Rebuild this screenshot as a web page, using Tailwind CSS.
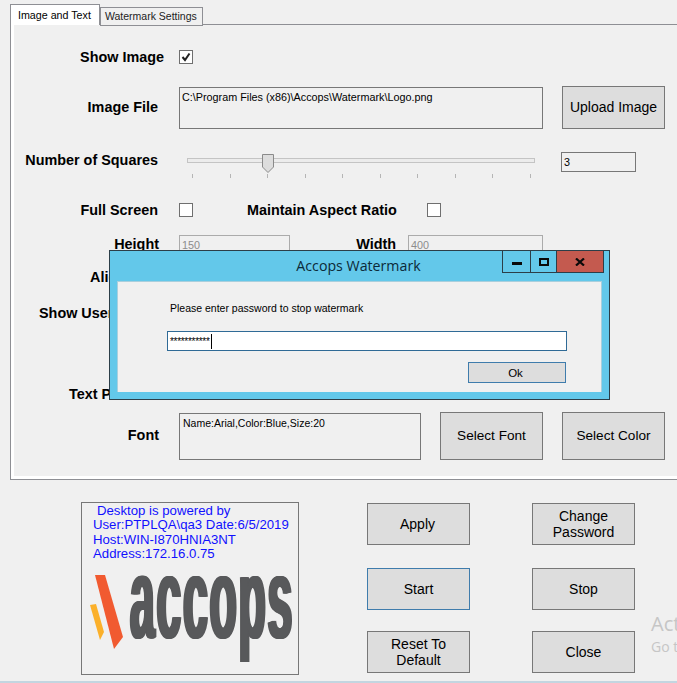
<!DOCTYPE html>
<html lang="en">

<head>
    <meta charset="UTF-8" />
    <meta name="viewport" content="width=device-width, initial-scale=1.0" />
    <title>Accops Watermark</title>
    <script src="https://cdn.jsdelivr.net/npm/@tailwindcss/browser@4"></script>
</head>

<body class="bg-[#f0f0f0]">
    <div class="relative w-[677px] h-[683px] overflow-hidden flex flex-col bg-[#f0f0f0] text-black font-['Liberation_Sans',sans-serif]">

        <!-- Tabs -->
        <div class="relative z-10 flex items-end h-[25px] ml-[10px] shrink-0 whitespace-nowrap">
            <div class="w-[90px] h-[21px] bg-white border border-b-0 border-[#8e8f94] pl-[7px] pt-[2px] text-[10.7px]">Image and Text</div>
            <div class="w-[103px] h-[19px] -mb-[1px] bg-[#f0f0f0] border border-[#8e8f94] pl-[4px] pt-[1px] text-[10.5px] text-[#222]">Watermark Settings</div>
        </div>

        <!-- Tab panel -->
        <div class="-mt-[1px] ml-[10px] w-[700px] h-[456px] shrink-0 border border-[#8e8f94]">
            <div class="h-full pt-[22px] border-l-[3px] border-b-[3px] border-white text-[14.4px] font-bold">

                <div class="flex items-center h-[20px]">
                    <div class="w-[165px] pr-[15px] pt-[2px] text-right">Show Image</div>
                    <div class="w-[14px] h-[14px] border border-[#6f6f6f] bg-white flex items-center justify-center">
                        <svg width="10" height="10" viewBox="0 0 10 10"><path d="M1.5 5 L4 8 L8.5 1.5" fill="none" stroke="#222" stroke-width="2" /></svg>
                    </div>
                </div>

                <div class="flex items-center h-[43px] mt-[19px]">
                    <div class="w-[165px] pr-[21px] text-right">Image File</div>
                    <div class="w-[364px] h-[42px] border border-[#777] pl-[2px] text-[10.8px] font-normal leading-[18px]">C:\Program Files (x86)\Accops\Watermark\Logo.png</div>
                    <div class="ml-[19px] w-[103px] h-[43px] border border-[#777] bg-[#dddddd] flex items-center justify-center font-normal text-[14px]">Upload Image</div>
                </div>

                <div class="flex h-[24px] mt-[19px]">
                    <div class="w-[165px] pr-[21px] text-right leading-[24px] whitespace-nowrap">Number of Squares</div>
                    <div class="relative ml-[8px] w-[348px] h-[30px]">
                        <div class="absolute left-0 right-0 top-[10px] h-[5px] bg-[#ececec] border border-[#c4c4c4]"></div>
                        <svg class="absolute left-[75px] top-[6px]" width="12" height="19" viewBox="0 0 12 19"><path d="M0.5 0.5 H11.5 V13 L6 18.5 L0.5 13 Z" fill="#dddddd" stroke="#8a8a8a" /></svg>
                        <div class="absolute left-[5px] w-[339px] top-[26px] h-[4px] flex justify-between">
                            <i class="w-px h-full bg-[#b5b5b5]"></i><i class="w-px h-full bg-[#b5b5b5]"></i><i class="w-px h-full bg-[#b5b5b5]"></i><i class="w-px h-full bg-[#b5b5b5]"></i><i class="w-px h-full bg-[#b5b5b5]"></i><i class="w-px h-full bg-[#b5b5b5]"></i><i class="w-px h-full bg-[#b5b5b5]"></i><i class="w-px h-full bg-[#b5b5b5]"></i><i class="w-px h-full bg-[#b5b5b5]"></i><i class="w-px h-full bg-[#b5b5b5]"></i>
                        </div>
                    </div>
                    <div class="ml-[26px] mt-[4px] w-[75px] h-[20px] border border-[#777] pl-[2px] text-[10.8px] font-normal leading-[18px]">3</div>
                </div>

                <div class="flex items-center h-[20px] mt-[28px]">
                    <div class="w-[165px] pr-[21px] pt-[2px] text-right">Full Screen</div>
                    <div class="w-[14px] h-[14px] border border-[#6f6f6f] bg-white"></div>
                    <div class="ml-[54px] w-[180px] pt-[2px] whitespace-nowrap">Maintain Aspect Ratio</div>
                    <div class="w-[14px] h-[14px] border border-[#6f6f6f] bg-white"></div>
                </div>

                <div class="flex items-start h-[20px] mt-[15px]">
                    <div class="w-[165px] pr-[20px] text-right leading-[18px]">Height</div>
                    <div class="w-[111px] h-[20px] border border-[#ababab] pl-[2px] text-[10.8px] font-normal text-[#8c8c8c] leading-[18px]">150</div>
                    <div class="w-[106px] text-right leading-[18px]">Width</div>
                    <div class="ml-[12px] w-[135px] h-[20px] border border-[#ababab] pl-[2px] text-[10.8px] font-normal text-[#8c8c8c] leading-[18px]">400</div>
                </div>

                <div class="flex items-center h-[20px] mt-[12px]">
                    <div class="pl-[76px] pt-[2px] whitespace-nowrap">Alignment</div>
                </div>

                <div class="flex items-center h-[20px] mt-[16px]">
                    <div class="pl-[25px] pt-[2px] whitespace-nowrap">Show User Details</div>
                </div>

                <div class="flex items-center h-[20px] mt-[61px]">
                    <div class="w-[165px] pl-[55px] pt-[2px] whitespace-nowrap">Text Position</div>
                    <div class="ml-[23px] text-[10.8px] font-normal">Top</div>
                </div>

                <div class="flex h-[49px] mt-[8px]">
                    <div class="w-[165px] pr-[20px] text-right leading-[46px]">Font</div>
                    <div class="mt-[1px] w-[242px] h-[47px] border border-[#777] pl-[3px] text-[10.5px] font-normal leading-[18px]">Name:Arial,Color:Blue,Size:20</div>
                    <div class="ml-[19px] w-[103px] h-[48px] border border-[#777] bg-[#dddddd] flex items-center justify-center font-normal text-[13.6px]">Select Font</div>
                    <div class="ml-[19px] w-[103px] h-[48px] border border-[#777] bg-[#dddddd] flex items-center justify-center font-normal text-[13.6px]">Select Color</div>
                </div>
            </div>
        </div>

        <!-- Bottom area -->
        <div class="flex flex-1 text-[14px]">
            <div class="relative ml-[81px] mt-[22px] w-[218px] h-[173px] border border-[#777] text-[13.2px] leading-[14.4px] text-[#1010ff] overflow-hidden">
                <div class="pt-[1px] whitespace-nowrap pl-[15px]">Desktop is powered by</div>
                <div class="pl-[11px] whitespace-nowrap">User:PTPLQA\qa3 Date:6/5/2019</div>
                <div class="pl-[11px] whitespace-nowrap">Host:WIN-I870HNIA3NT</div>
                <div class="pl-[11px] whitespace-nowrap">Address:172.16.0.75</div>
                <svg class="absolute left-0 top-0" width="216" height="171" viewBox="0 0 216 171">
                    <polygon points="13,72 23,72 41,134 32,146" fill="#f15a30" />
                    <polygon points="8,102 14,101 22,129 18,137" fill="#fbb02a" />
                </svg>
                <span class="absolute left-[48px] top-[60px] origin-top-left scale-x-[0.385] text-[115px] leading-[70px] tracking-[5px] font-bold text-[#58595b] [text-shadow:2px_0_0_#58595b,4px_0_0_#58595b,-2px_0_0_#58595b,-4px_0_0_#58595b]">accops</span>
            </div>

            <div class="ml-[68px] mt-[23px]">
                <div class="flex gap-[62px] mb-[23px]">
                    <div class="w-[103px] h-[42px] border border-[#777] bg-[#dddddd] flex items-center justify-center pr-[2px]">Apply</div>
                    <div class="w-[103px] h-[42px] border border-[#777] bg-[#dddddd] flex items-center justify-center text-center leading-[16px]">Change<br />Password</div>
                </div>
                <div class="flex gap-[62px] mb-[21px]">
                    <div class="w-[103px] h-[42px] border border-[#3f7cac] bg-[#dddddd] flex items-center justify-center">Start</div>
                    <div class="w-[103px] h-[42px] border border-[#777] bg-[#dddddd] flex items-center justify-center">Stop</div>
                </div>
                <div class="flex gap-[62px]">
                    <div class="w-[103px] h-[42px] border border-[#777] bg-[#dddddd] flex items-center justify-center text-center leading-[16px]">Reset To<br />Default</div>
                    <div class="w-[103px] h-[42px] border border-[#777] bg-[#dddddd] flex items-center justify-center">Close</div>
                </div>
            </div>
        </div>
        <div class="h-[2px] shrink-0 bg-[#c3d5e0]"></div>

        <!-- Windows activation watermark -->
        <div class="absolute left-[651px] top-[610px] text-[#c6c6c6] font-['Open_Sans',sans-serif] whitespace-nowrap">
            <div class="text-[20px] leading-[27px]">Activate Windows</div>
            <div class="text-[14px] leading-[19px]">Go to Settings</div>
        </div>

        <!-- Password dialog -->
        <div class="absolute left-[109px] top-[250px] w-[501px] h-[150px] bg-[#63c8ea] border border-[#2c3e48] flex flex-col">
            <div class="relative h-[30px] shrink-0 pr-[2px] text-center font-['Open_Sans',sans-serif] text-[14.2px] leading-[29px] text-[#0c2a38]">
                Accops Watermark
                <div class="absolute left-[392px] top-[-1px] w-[102px] h-[23px] flex border border-[#2c3e48]">
                    <div class="w-[28px] border-r border-[#2c3e48] flex items-center justify-center">
                        <svg width="10" height="10" viewBox="0 0 10 10"><rect x="0" y="5" width="10" height="3" fill="#0a0a0a" /></svg>
                    </div>
                    <div class="w-[26px] border-r border-[#2c3e48] flex items-center justify-center">
                        <svg width="10" height="8" viewBox="0 0 10 8"><rect x="1" y="1" width="8" height="6" fill="none" stroke="#0a0a0a" stroke-width="2" /></svg>
                    </div>
                    <div class="flex-1 bg-[#c45a4f] flex items-center justify-center">
                        <svg width="10" height="8" viewBox="0 0 10 8"><path d="M1 0.5 L9 7.5 M9 0.5 L1 7.5" stroke="#0a0a0a" stroke-width="2.2" /></svg>
                    </div>
                </div>
            </div>
            <div class="mx-[7px] h-[111px] bg-[#f0f0f0] border-t border-x border-[#a9cfdd] text-[10.5px]">
                <div class="pl-[52px] pt-[19px] leading-[15px]">Please enter password to stop watermark</div>
                <div class="ml-[49px] mt-[15px] w-[400px] h-[20px] bg-white border border-[#2f6a96] flex items-center pl-[2px] text-[10px] leading-[10px]">
                    <span class="h-[8px] tracking-[-0.3px]">***********</span>
                    <span class="w-px h-[15px] bg-black ml-[1px]"></span>
                </div>
                <div class="ml-[350px] mt-[11px] w-[98px] h-[21px] bg-[#dddddd] border border-[#3f7cac] flex items-center justify-center text-[11.5px] pr-[3px] pt-[2px]">Ok</div>
            </div>
        </div>
    </div>
</body>

</html>
